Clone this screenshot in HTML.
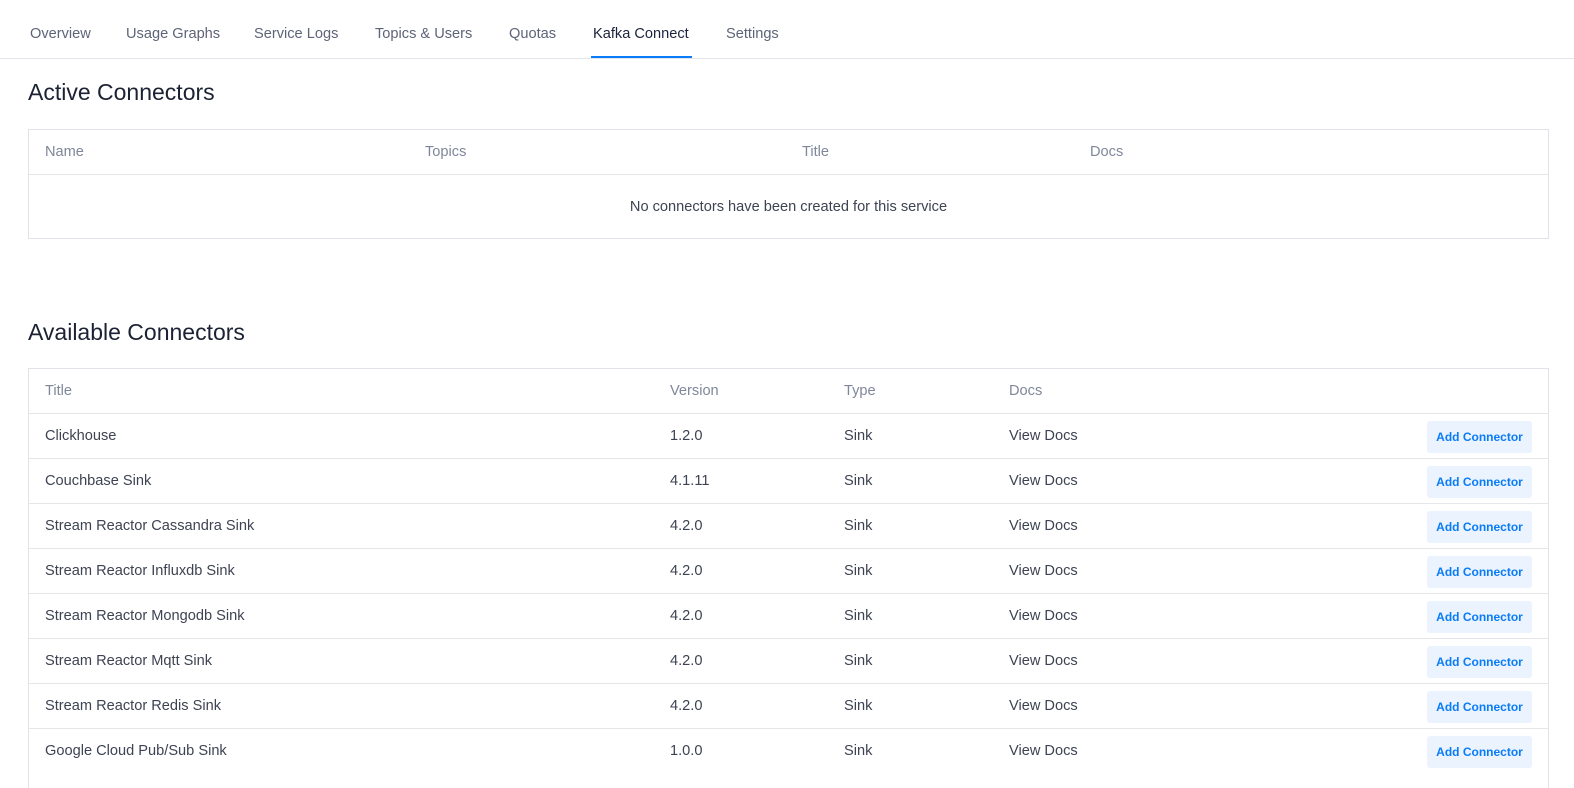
<!DOCTYPE html>
<html><head><style>
*{margin:0;padding:0;box-sizing:border-box}
body{width:1574px;height:774px;overflow:hidden;background:#fff;font-family:"Liberation Sans",Roboto,sans-serif;color:#3d4352;position:relative}
.tab{position:absolute;top:26px;font-size:14.6px;color:#5d6478}
.tab.act{color:#1b2340}
.ul{position:absolute;left:591px;top:56px;width:101px;height:2px;background:#0a7cf7}
.hr{position:absolute;left:0;top:58px;width:1574px;height:1px;background:#e3e5ea}
h2{position:absolute;left:28px;font-size:23px;font-weight:normal;color:#1b2233}
.box{position:absolute;left:28px;width:1521px;border:1px solid #e1e3e8}
.row{position:relative;height:45px;border-bottom:1px solid #e4e6ea;font-size:14.6px}
.row:last-child{border-bottom:none}
.row span{position:absolute;top:14px}
.hd span{color:#7f879a}
.btn{position:absolute;left:1398px;top:7px;width:105px;height:32px;background:#ebf3fe;border-radius:3px;color:#0a7cf7;font-size:12px;font-weight:bold;text-align:center;line-height:32px}
</style></head><body>
<div class="tab" style="left:30px">Overview</div>
<div class="tab" style="left:126px">Usage Graphs</div>
<div class="tab" style="left:254px">Service Logs</div>
<div class="tab" style="left:375px">Topics &amp; Users</div>
<div class="tab" style="left:509px">Quotas</div>
<div class="tab act" style="left:593px">Kafka Connect</div>
<div class="tab" style="left:726px">Settings</div>
<div class="hr"></div><div class="ul"></div>
<h2 style="top:79px">Active Connectors</h2>
<div class="box" style="top:129px;height:110px">
<div class="row hd"><span style="left:16px">Name</span><span style="left:396px">Topics</span><span style="left:773px">Title</span><span style="left:1061px">Docs</span></div>
<div class="row" style="height:64px"><span style="left:0;width:100%;text-align:center;top:24px">No connectors have been created for this service</span></div>
</div>
<h2 style="top:319px">Available Connectors</h2>
<div class="box" style="top:368px;height:420px;border-bottom:none">
<div class="row hd"><span style="left:16px">Title</span><span style="left:641px">Version</span><span style="left:815px">Type</span><span style="left:980px">Docs</span></div>
<div class="row"><span style="left:16px">Clickhouse</span><span style="left:641px">1.2.0</span><span style="left:815px">Sink</span><span style="left:980px">View Docs</span><div class="btn">Add Connector</div></div>
<div class="row"><span style="left:16px">Couchbase Sink</span><span style="left:641px">4.1.11</span><span style="left:815px">Sink</span><span style="left:980px">View Docs</span><div class="btn">Add Connector</div></div>
<div class="row"><span style="left:16px">Stream Reactor Cassandra Sink</span><span style="left:641px">4.2.0</span><span style="left:815px">Sink</span><span style="left:980px">View Docs</span><div class="btn">Add Connector</div></div>
<div class="row"><span style="left:16px">Stream Reactor Influxdb Sink</span><span style="left:641px">4.2.0</span><span style="left:815px">Sink</span><span style="left:980px">View Docs</span><div class="btn">Add Connector</div></div>
<div class="row"><span style="left:16px">Stream Reactor Mongodb Sink</span><span style="left:641px">4.2.0</span><span style="left:815px">Sink</span><span style="left:980px">View Docs</span><div class="btn">Add Connector</div></div>
<div class="row"><span style="left:16px">Stream Reactor Mqtt Sink</span><span style="left:641px">4.2.0</span><span style="left:815px">Sink</span><span style="left:980px">View Docs</span><div class="btn">Add Connector</div></div>
<div class="row"><span style="left:16px">Stream Reactor Redis Sink</span><span style="left:641px">4.2.0</span><span style="left:815px">Sink</span><span style="left:980px">View Docs</span><div class="btn">Add Connector</div></div>
<div class="row" style="border-bottom:none"><span style="left:16px">Google Cloud Pub/Sub Sink</span><span style="left:641px">1.0.0</span><span style="left:815px">Sink</span><span style="left:980px">View Docs</span><div class="btn">Add Connector</div></div>
</div>
</body></html>
